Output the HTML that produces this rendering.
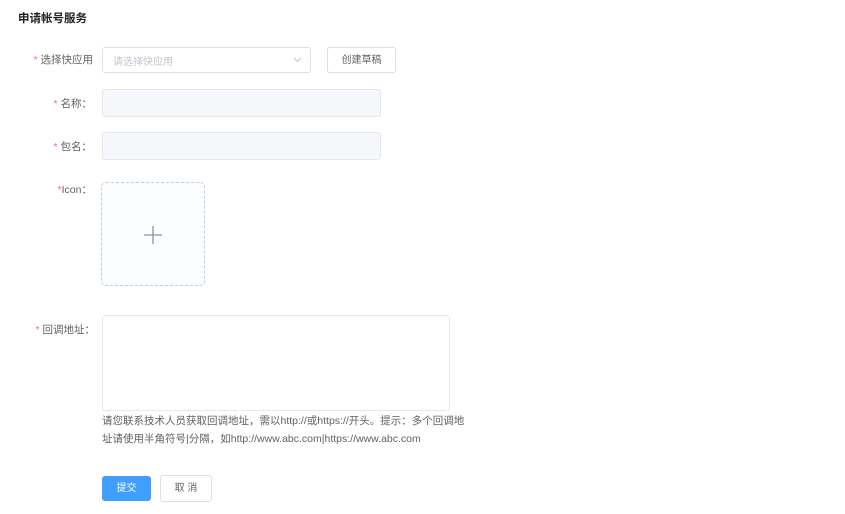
<!DOCTYPE html><html><head><meta charset="utf-8"><style>
body{margin:0;width:845px;height:514px;background:#fff;font-family:"Liberation Sans","Noto Sans CJK SC",sans-serif;position:relative;overflow:hidden;color:#606266}
.a{position:absolute}
.t{left:18px;top:10px;font-size:11.5px;font-weight:bold;color:#222}
.l{font-size:10.5px;text-align:right;width:92px;left:0;color:#606266}
.l b{color:#f56c6c;font-weight:normal}
.in{border:1px solid #dcdfe6;border-radius:3px;box-sizing:border-box}
.dis{background:#f5f7fa;border-color:#e4e7ed}
</style></head><body>
<div class="a t">申请帐号服务</div>
<div class="a l" style="top:52px;width:93px"><b>*</b> 选择快应用</div>
<div class="a in" style="left:102px;top:47px;width:209px;height:26px"></div>
<div class="a" style="left:113px;top:53px;font-size:10px;color:#c0c4cc">请选择快应用</div>
<svg class="a" style="left:293px;top:57px" width="9" height="6" viewBox="0 0 9 6"><path d="M1 1l3.5 3.5L8 1" fill="none" stroke="#c0c4cc"/></svg>
<div class="a in" style="left:327px;top:47px;width:69px;height:26px;font-size:10px;color:#606266;text-align:center;line-height:25px">创建草稿</div>
<div class="a l" style="top:96px"><b>*</b> 名称：</div>
<div class="a in dis" style="left:102px;top:89px;width:279px;height:28px"></div>
<div class="a l" style="top:139px"><b>*</b> 包名：</div>
<div class="a in dis" style="left:102px;top:132px;width:279px;height:28px"></div>
<div class="a l" style="top:182px"><b>*</b>Icon：</div>
<div class="a" style="left:101px;top:182px;width:102px;height:102px;border:1px dashed #c0ccda;border-radius:5px;background:#fbfdff"></div>
<svg class="a" style="left:144px;top:226px" width="18" height="18"><path d="M9 0v18M0 9h18" stroke="#8c939d" stroke-width="1.3"/></svg>
<div class="a l" style="top:322px;width:95px"><b>*</b> 回调地址：</div>
<div class="a in" style="left:102px;top:315px;width:348px;height:96px;border-color:#e4e7ed"></div>
<div class="a" style="left:102px;top:412px;font-size:10.5px;line-height:18px;width:374px;color:#606266">请您联系技术人员获取回调地址，需以http://或https://开头。提示：多个回调地<br>址请使用半角符号|分隔，如http://www.abc.com|https://www.abc.com</div>
<div class="a" style="left:102px;top:476px;width:49px;height:25px;background:#409eff;border-radius:3px;color:#fff;font-size:10px;text-align:center;line-height:25px">提交</div>
<div class="a in" style="left:160px;top:475px;width:52px;height:27px;font-size:10px;text-align:center;line-height:25px;border-color:#dcdfe6">取 消</div>
</body></html>
